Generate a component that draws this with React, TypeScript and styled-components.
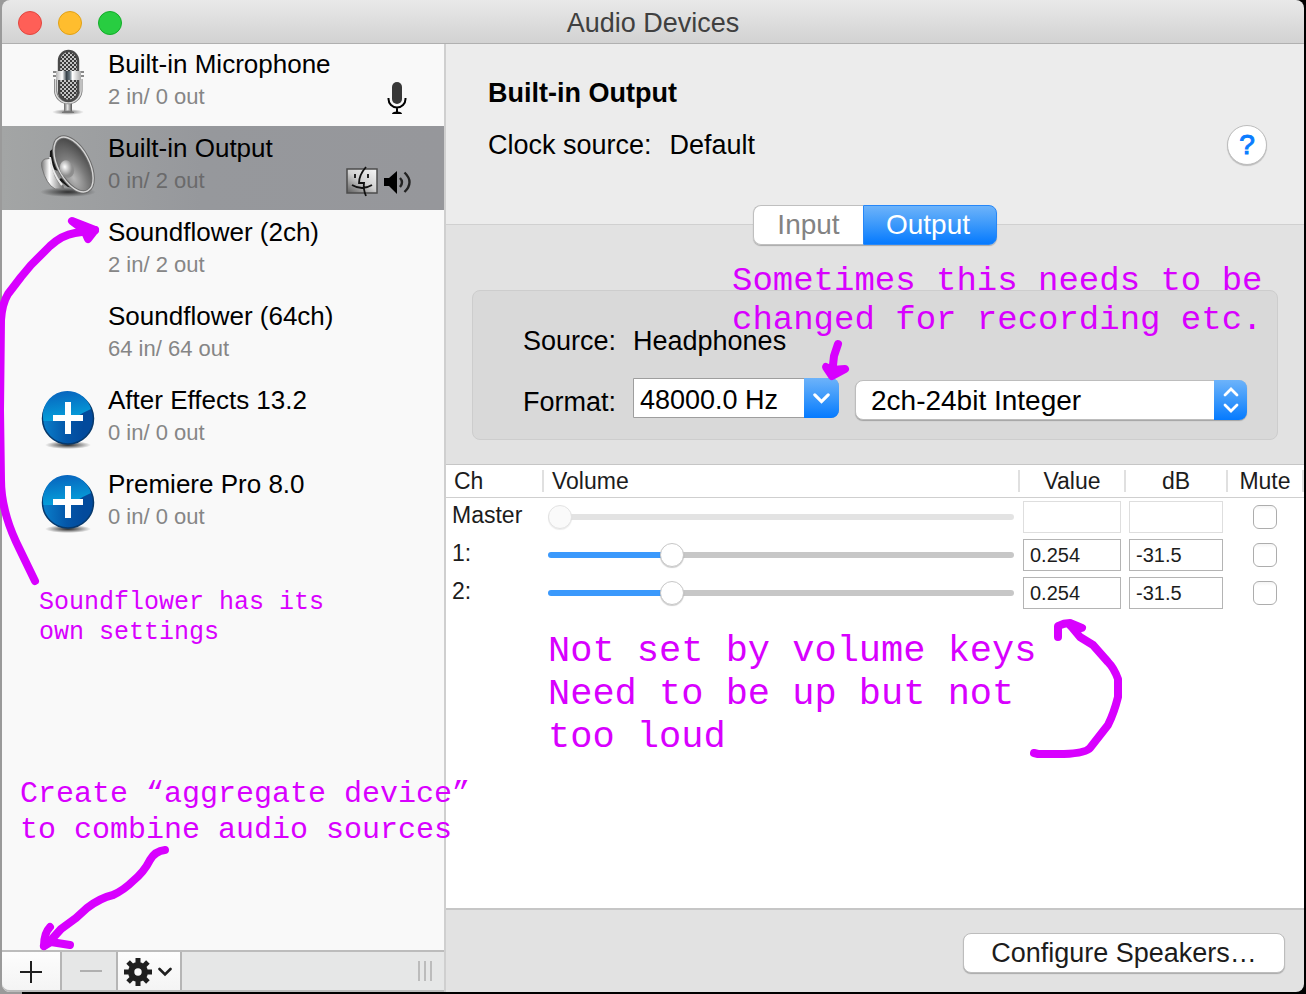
import React, { useState } from 'react';
import styled, { createGlobalStyle, css } from 'styled-components';

const INK = '#d800ff';
const BLUE = 'linear-gradient(#6db3fa, #3a98fb 50%, #057aff)';

const GlobalStyle = createGlobalStyle`
  *, *::before, *::after { box-sizing: border-box; }
  body {
    margin: 0;
    background: linear-gradient(to right, #9a9a9a 22px, #000 22px);
    font-family: "Liberation Sans", Arial, sans-serif;
    color: #000;
  }
  button, input, select { font: inherit; color: inherit; margin: 0; }
`;

const Page = styled.div`
  min-height: 100vh;
  display: flex;
  padding: 0 2px 2px;
`;

const Window = styled.div`
  flex: 1;
  min-width: 0;
  display: flex;
  flex-direction: column;
`;

const TitleBar = styled.header`
  display: grid;
  grid-template-columns: 1fr auto 1fr;
  align-items: center;
  height: 44px;
  padding: 2px 16px 0;
  border-bottom: 1px solid #b0b0b0;
  border-radius: 8px 8px 0 0;
  background: linear-gradient(#e9e9e9, #d2d2d2);
`;

const Lights = styled.div`
  display: flex;
  gap: 16px;
`;

const Light = styled.button<{ $fill: string; $edge: string }>`
  width: 24px;
  height: 24px;
  padding: 0;
  border-radius: 50%;
  border: 1px solid ${(p) => p.$edge};
  background: ${(p) => p.$fill};
`;

const WindowTitle = styled.h1`
  margin: 0;
  font-size: 27px;
  line-height: 32px;
  font-weight: 400;
  color: #404040;
`;

const Body = styled.div`
  flex: 1;
  display: grid;
  grid-template-columns: 444px minmax(0, 1fr);
`;

const Sidebar = styled.aside`
  position: relative;
  z-index: 1;
  display: flex;
  flex-direction: column;
  border-right: 2px solid #cfcfcf;
  border-radius: 0 0 0 8px;
  background: #f9f9f9;
`;

const DeviceList = styled.ul`
  flex: 1;
  margin: -2px 0 0;
  padding: 0;
  list-style: none;
`;

const DeviceItem = styled.li<{ $selected?: boolean }>`
  display: grid;
  grid-template-columns: 60px 1fr auto;
  column-gap: 10px;
  height: 84px;
  padding: 0 32px 0 36px;
  ${(p) => p.$selected && css`background: linear-gradient(to right, #a3a5a5, #96989c 45%, #96979b);`}
`;

const DeviceText = styled.div`
  display: flex;
  flex-direction: column;
  gap: 4px;
  padding-top: 7px;
  white-space: nowrap;
`;

const DeviceName = styled.span`
  font-size: 26px;
  line-height: 30px;
`;

const DeviceInfo = styled.span<{ $selected?: boolean }>`
  font-size: 22px;
  line-height: 28px;
  color: ${(p) => (p.$selected ? '#6a6a6b' : '#868686')};
`;

const Badges = styled.div`
  display: flex;
  gap: 6px;
  align-self: end;
  padding-bottom: 12px;
`;

const SidebarBar = styled.div`
  display: flex;
  align-items: stretch;
  height: 42px;
  border-top: 2px solid #bcbcbc;
  border-bottom: 2px solid #bcbcbc;
  border-radius: 0 0 0 8px;
  background: #e6e7e7;
`;

const BarButton = styled.button<{ $width: number }>`
  display: flex;
  align-items: center;
  justify-content: center;
  gap: 6px;
  width: ${(p) => p.$width}px;
  padding: 2px 2px 0 0;
  border: 0;
  border-right: 2px solid #b5b5b5;
  background: linear-gradient(#fdfdfd, #f4f4f4);
  color: #1f1f1f;
  &:first-child { border-bottom-left-radius: 8px; padding-right: 0; }
  &:disabled { padding: 0 0 0 4px; background: #e6e7e7; color: #b0b0b0; }
`;

const Grip = styled.span`
  align-self: center;
  width: 15px;
  height: 20px;
  margin: 0 11px 0 auto;
  background: repeating-linear-gradient(to right, #bcbcbc 0 2px, transparent 2px 6px);
`;

const Main = styled.main`
  display: flex;
  flex-direction: column;
  min-width: 0;
  border-bottom-right-radius: 8px;
  background: #e2e2e2;
`;

const DeviceHeader = styled.section`
  display: flex;
  flex-direction: column;
  gap: 16px;
  padding: 33px 37px 59px 42px;
  background: #ececec;
`;

const DeviceTitle = styled.h2`
  margin: 0;
  font-size: 27px;
  line-height: 32px;
`;

const ClockRow = styled.div`
  display: flex;
  align-items: center;
  gap: 18px;
  height: 40px;
  font-size: 27px;
`;

const HelpButton = styled.button`
  width: 40px;
  height: 40px;
  margin-left: auto;
  padding: 0;
  border: 1px solid #bdbdbd;
  border-radius: 50%;
  background: #fff;
  box-shadow: 0 1px 1px rgba(0, 0, 0, 0.2);
  font-size: 28px;
  line-height: 36px;
  color: #0a7cff;
  -webkit-text-stroke: 1px #0a7cff;
`;

const Settings = styled.section`
  position: relative;
  display: flex;
  flex-direction: column;
  padding: 0 26px 24px;
  border-top: 1px solid #d0d0d0;
`;

const Segments = styled.div`
  display: flex;
  align-self: center;
  height: 40px;
  margin: -20px 0 45px;
  border-radius: 8px;
  box-shadow: 0 1px 1px rgba(0, 0, 0, 0.25);
`;

const Segment = styled.button<{ $active?: boolean }>`
  width: ${(p) => (p.$active ? 134 : 110)}px;
  padding: 0;
  font-size: 28px;
  line-height: 36px;
  border: 1px solid #bfbfbf;
  border-right: 0;
  border-radius: 8px 0 0 8px;
  background: #fff;
  color: #838383;
  ${(p) =>
    p.$active &&
    css`
      padding-right: 4px;
      border: 1px solid #2687f8;
      border-radius: 0 8px 8px 0;
      background: ${BLUE};
      color: #fff;
    `}
`;

const Group = styled.div`
  display: flex;
  flex-direction: column;
  gap: 21px;
  padding: 34px 30px 19px 50px;
  border: 1px solid #cdcdcd;
  border-radius: 8px;
  background: #d9d9d9;
  font-size: 27px;
`;

const Field = styled.div`
  display: flex;
  gap: 16px;
  line-height: 32px;
`;

const FieldName = styled.span`
  width: 94px;
`;

const FormatRow = styled.div`
  display: flex;
  gap: 16px;
  height: 42px;
`;

const FormatLabel = styled.label`
  align-self: end;
  width: 94px;
  line-height: 36px;
`;

const SelectBox = styled.div<{ $popup?: boolean }>`
  display: grid;
  grid-template-columns: 1fr auto;
  height: 40px;
  ${(p) => (p.$popup ? css`flex: 1; align-self: end;` : css`width: 206px;`)}
`;

const Select = styled.select<{ $popup?: boolean }>`
  appearance: none;
  grid-area: 1 / 1 / 2 / 3;
  width: 100%;
  height: 40px;
  padding: ${(p) => (p.$popup ? '0 36px 0 15px' : '4px 36px 0 6px')};
  border: ${(p) => (p.$popup ? '1px solid #bdbdbd' : '1px solid #9e9e9e')};
  border-radius: ${(p) => (p.$popup ? '8px' : '0 8px 8px 0')};
  background: #fff;
  font-size: ${(p) => (p.$popup ? 28 : 27)}px;
  box-shadow: ${(p) => (p.$popup ? '0 1px 1px rgba(0, 0, 0, 0.25)' : 'none')};
`;

const SelectArrow = styled.span<{ $width: number }>`
  grid-area: 1 / 2 / 2 / 3;
  z-index: 1;
  display: flex;
  align-items: center;
  justify-content: center;
  width: ${(p) => p.$width}px;
  border-radius: 0 8px 8px 0;
  background: ${BLUE};
  pointer-events: none;
`;

const ChannelPanel = styled.section`
  position: relative;
  flex: 1;
  border-top: 1px solid #c6c6c6;
  background: #fff;
`;

const Table = styled.table`
  width: 100%;
  table-layout: fixed;
  border-collapse: separate;
  border-spacing: 0;
  font-size: 23px;
  color: #1c1c1c;
`;

const HeadCell = styled.th<{ $width?: number; $center?: boolean }>`
  width: ${(p) => (p.$width ? `${p.$width}px` : 'auto')};
  height: 33px;
  padding: 0;
  border-bottom: 1px solid #cfcfcf;
  font-weight: 400;
  text-align: ${(p) => (p.$center ? 'center' : 'left')};
  span {
    display: block;
    height: 22px;
    padding: 0 ${(p) => (p.$center ? 0 : 8)}px;
    border-right: 2px solid #e0e0e0;
    line-height: 22px;
  }
`;

const RowHead = styled.th`
  height: 38px;
  padding: 0 0 4px 6px;
  font-weight: 400;
  text-align: left;
`;

const Cell = styled.td<{ $pad: string; $center?: boolean }>`
  height: 38px;
  padding: ${(p) => p.$pad};
  line-height: 0;
  text-align: ${(p) => (p.$center ? 'center' : 'left')};
`;

const Slider = styled.input`
  --track: #c7c7c7;
  --fill: #3b99fc;
  --at: calc(12px + (100% - 24px) * var(--level));
  appearance: none;
  display: block;
  width: 100%;
  height: 26px;
  background: transparent;
  &::-webkit-slider-runnable-track {
    height: 6px;
    border-radius: 3px;
    background: linear-gradient(to right, var(--fill) var(--at), var(--track) var(--at));
  }
  &::-webkit-slider-thumb {
    appearance: none;
    width: 24px;
    height: 24px;
    margin-top: -9px;
    border: 1px solid #c8c8c8;
    border-radius: 50%;
    background: #fff;
    box-shadow: 0 1px 1px rgba(0, 0, 0, 0.2);
  }
  &:disabled {
    --track: #e3e3e3;
    --fill: #e3e3e3;
  }
  &:disabled::-webkit-slider-thumb {
    border-color: #e3e3e3;
    background: #fafafa;
    box-shadow: 0 1px 1px rgba(0, 0, 0, 0.08);
  }
`;

const NumberBox = styled.input`
  width: 100%;
  height: 32px;
  padding: 0 6px;
  border: 1px solid #b4b4b4;
  border-radius: 0;
  background: #fff;
  font-size: 20px;
  &:disabled { border: 1px solid #dedede; }
`;

const Tick = styled.input`
  appearance: none;
  width: 24px;
  height: 24px;
  border: 1px solid #adadad;
  border-radius: 6px;
  background: linear-gradient(#f4f4f4, #fff 4px);
  &:checked { background: ${BLUE}; }
`;

const Footer = styled.footer`
  display: flex;
  justify-content: flex-end;
  height: 84px;
  padding: 23px 19px 0;
  border-top: 2px solid #c6c6c6;
`;

const PushButton = styled.button`
  width: 322px;
  height: 40px;
  padding: 0;
  border: 1px solid #bdbdbd;
  border-radius: 8px;
  background: #fff;
  box-shadow: 0 1px 1px rgba(0, 0, 0, 0.25);
  font-size: 27px;
  line-height: 36px;
  color: #1c1c1c;
`;

type Spot = { $top?: number; $bottom?: number; $left?: number; $right?: number };

const spot = css<Spot>`
  position: absolute;
  ${(p) => p.$top !== undefined && `top: ${p.$top}px;`}
  ${(p) => p.$bottom !== undefined && `bottom: ${p.$bottom}px;`}
  ${(p) => p.$left !== undefined && `left: ${p.$left}px;`}
  ${(p) => p.$right !== undefined && `right: ${p.$right}px;`}
  z-index: 2;
  pointer-events: none;
`;

const Note = styled.p<Spot & { $size: number; $line: number }>`
  ${spot}
  margin: 0;
  font-family: "Liberation Mono", monospace;
  font-size: ${(p) => p.$size}px;
  line-height: ${(p) => p.$line}px;
  white-space: nowrap;
  color: ${INK};
`;

const Arrow = styled.svg<Spot>`
  ${spot}
  overflow: visible;
  fill: none;
  stroke: ${INK};
  stroke-width: 8px;
  stroke-linecap: round;
  stroke-linejoin: round;
`;

const StudioMicIcon = () => (
  <svg width="60" height="76" viewBox="0 0 60 76" aria-hidden="true">
    <defs>
      <pattern id="mesh" width="4" height="4" patternUnits="userSpaceOnUse">
        <rect width="4" height="4" fill="#3a3a3a" />
        <circle cx="1" cy="1" r="1" fill="#f2f2f2" />
        <circle cx="3" cy="3" r="1" fill="#f2f2f2" />
      </pattern>
      <linearGradient id="band">
        <stop offset="0" stopColor="#b5b5b5" />
        <stop offset=".25" stopColor="#fff" />
        <stop offset=".42" stopColor="#39434a" />
        <stop offset=".56" stopColor="#6d7a82" />
        <stop offset=".66" stopColor="#fff" />
        <stop offset="1" stopColor="#aaa" />
      </linearGradient>
      <linearGradient id="stem">
        <stop offset="0" stopColor="#666" />
        <stop offset=".45" stopColor="#e6e6e6" />
        <stop offset="1" stopColor="#555" />
      </linearGradient>
      <radialGradient id="micShade">
        <stop offset="0" stopColor="#000" stopOpacity=".55" />
        <stop offset="1" stopColor="#000" stopOpacity="0" />
      </radialGradient>
    </defs>
    <ellipse cx="30" cy="70" rx="16" ry="3" fill="url(#micShade)" />
    <rect x="26" y="61" width="8" height="9" fill="url(#stem)" />
    <path d="M24 70q6-3 12 0v1H24z" fill="#777" />
    <path d="M17.500 37v12a12.800 13 0 0 0 25.500 0V37" fill="none" stroke="#777" strokeWidth="3" />
    <path d="M17.500 37v12a12.800 13 0 0 0 25.500 0V37" fill="none" stroke="#dadada" strokeWidth="1.500" />
    <rect x="21" y="9" width="19" height="50" rx="9.500" fill="url(#mesh)" stroke="#4a4a4a" strokeWidth="2.400" />
    <path d="M15 30h4M15 34h4M42 30h4M42 34h4" stroke="#888" strokeWidth="2" />
    <rect x="18" y="29" width="25" height="9" rx="1" fill="url(#band)" />
  </svg>
);

const SpeakerConeIcon = () => (
  <svg width="60" height="76" viewBox="0 0 60 76" aria-hidden="true">
    <defs>
      <linearGradient id="magnet">
        <stop offset="0" stopColor="#777" />
        <stop offset=".35" stopColor="#fff" />
        <stop offset=".65" stopColor="#bbb" />
        <stop offset="1" stopColor="#666" />
      </linearGradient>
      <radialGradient id="cone" cx=".3" cy=".7" r=".75">
        <stop offset="0" stopColor="#b8b8b8" />
        <stop offset=".5" stopColor="#7a7a7a" />
        <stop offset="1" stopColor="#484848" />
      </radialGradient>
      <radialGradient id="dome" cx=".4" cy=".35">
        <stop offset="0" stopColor="#fff" />
        <stop offset="1" stopColor="#8d8d8d" />
      </radialGradient>
      <radialGradient id="coneShade">
        <stop offset="0" stopColor="#000" stopOpacity=".7" />
        <stop offset="1" stopColor="#000" stopOpacity="0" />
      </radialGradient>
    </defs>
    <ellipse cx="30" cy="66" rx="28" ry="5" fill="url(#coneShade)" />
    <path d="M7 33q-5 2-3 9 4 16 13 21l9 0-10-31z" fill="url(#magnet)" stroke="#777" />
    <path d="M13 24l4-8 26 50-22-8q-10-14-8-34z" fill="#8a8a8a" />
    <path d="M12 25q-1 12 3 18l5 2-5-22zM21 54l9 7 6 1-13-10z" fill="#161616" />
    <path d="M12 31q2 16 12 28" fill="none" stroke="#e8e8e8" strokeWidth="2" />
    <g transform="rotate(-28 35.500 38.500)">
      <ellipse cx="35.500" cy="38.500" rx="15.500" ry="30" fill="url(#cone)" stroke="#6c6c6c" strokeWidth="3.400" />
      <ellipse cx="35.500" cy="38.500" rx="15.500" ry="30" fill="none" stroke="#d6d6d6" strokeWidth="1.400" />
    </g>
    <ellipse cx="29" cy="43" rx="7" ry="9" transform="rotate(-18 29 43)" fill="url(#dome)" />
  </svg>
);

const PlusDiscIcon = () => (
  <svg width="60" height="76" viewBox="0 0 60 76" aria-hidden="true">
    <defs>
      <linearGradient id="disc" x1="0" y1=".8" x2=".8" y2=".8">
        <stop offset="0" stopColor="#0a80cc" />
        <stop offset=".6" stopColor="#0456a8" />
        <stop offset="1" stopColor="#024a9c" />
      </linearGradient>
      <linearGradient id="gloss" x1=".3" y1="0" x2=".5" y2="1">
        <stop offset="0" stopColor="#0863bd" />
        <stop offset="1" stopColor="#05a3dc" />
      </linearGradient>
      <radialGradient id="discShade">
        <stop offset="0" stopColor="#000" stopOpacity=".85" />
        <stop offset="1" stopColor="#000" stopOpacity="0" />
      </radialGradient>
    </defs>
    <ellipse cx="30" cy="67" rx="23" ry="4" fill="url(#discShade)" />
    <circle cx="30" cy="40.500" r="25.500" fill="url(#disc)" stroke="#07396c" strokeWidth="1.500" />
    <path d="M5.500 43A24.500 24.500 0 0 1 53 31Q44 35 38 39T22 43z" fill="url(#gloss)" />
    <path d="M30 24v32M15 40h30" stroke="#fff" strokeWidth="6" />
  </svg>
);

const MicBadge = () => (
  <svg width="28" height="32" viewBox="0 0 28 32" role="img" aria-label="Default input">
    <rect x="8" y="0" width="10" height="22" rx="5" fill="#383838" />
    <path d="M4.500 16v1a8.500 8.500 0 0 0 17 0v-1M13 26v4" fill="none" stroke="#000" strokeWidth="2" />
    <path d="M8 32q0-2.500 5-2.500t5 2.500z" />
  </svg>
);

const FinderBadge = () => (
  <svg width="32" height="32" viewBox="0 0 32 32" role="img" aria-label="System sounds">
    <defs>
      <linearGradient id="face" x1=".9" y1="0" x2=".1" y2="1">
        <stop offset="0" stopColor="#f4f4f4" />
        <stop offset=".5" stopColor="#d0d0d0" />
        <stop offset="1" stopColor="#666" />
      </linearGradient>
    </defs>
    <rect x="1" y="3" width="30" height="24" fill="url(#face)" stroke="#4c4c4c" strokeWidth="1.500" />
    <path d="M9 8v4M22 8v4M6 19q10 6 20 0M20 1q-7 8-7 16h5q-1 6 2 13" fill="none" stroke="#111" strokeWidth="1.800" />
  </svg>
);

const SpeakerBadge = () => (
  <svg width="28" height="32" viewBox="0 0 28 32" role="img" aria-label="Default output">
    <path d="M0 12h5l8-7v23l-8-8H0z" />
    <path d="M16 12q4 4 0 9" fill="none" stroke="#222" strokeWidth="2.400" />
    <path d="M20.500 6.500q10 9.500 0 19.500" fill="none" stroke="#222" strokeWidth="2.400" />
  </svg>
);

const GearIcon = () => (
  <svg width="28" height="28" viewBox="-14 -14 28 28" aria-hidden="true">
    {[0, 45, 90, 135].map((angle) => (
      <rect key={angle} x="-2.500" y="-14" width="5" height="28" transform={`rotate(${angle})`} fill="#1f1f1f" />
    ))}
    <circle r="7" fill="none" stroke="#1f1f1f" strokeWidth="6" />
    <circle r="3.700" fill="#fafafa" />
  </svg>
);

const Chevron = ({ width = 14, color = '#fff' }) => (
  <svg width={width} height={width - 4} viewBox="0 0 14 10" aria-hidden="true">
    <path d="M1.500 2L7 7.500L12.500 2" fill="none" stroke={color} strokeWidth="2.600" strokeLinecap="round" />
  </svg>
);

const UpDown = () => (
  <svg width="16" height="26" viewBox="0 0 16 26" fill="none" stroke="#fff" strokeWidth="2.800" strokeLinecap="round" aria-hidden="true">
    <path d="M2 8L8 2l6 6M2 18l6 6 6-6" />
  </svg>
);

const devices = [
  { name: 'Built-in Microphone', info: '2 in/ 0 out', icon: <StudioMicIcon />, badges: <MicBadge /> },
  { name: 'Built-in Output', info: '0 in/ 2 out', icon: <SpeakerConeIcon />, badges: <><FinderBadge /><SpeakerBadge /></>, selected: true },
  { name: 'Soundflower (2ch)', info: '2 in/ 2 out' },
  { name: 'Soundflower (64ch)', info: '64 in/ 64 out' },
  { name: 'After Effects 13.2', info: '0 in/ 0 out', icon: <PlusDiscIcon /> },
  { name: 'Premiere Pro 8.0', info: '0 in/ 0 out', icon: <PlusDiscIcon /> },
];

const channels = [
  { name: 'Master', level: 0, value: '', db: '', disabled: true },
  { name: '1:', level: 0.254, value: '0.254', db: '-31.5', disabled: false },
  { name: '2:', level: 0.254, value: '0.254', db: '-31.5', disabled: false },
];

const ChannelRow = ({ channel }: { channel: (typeof channels)[number] }) => {
  const [level, setLevel] = useState(channel.level);
  return (
    <tr>
      <RowHead scope="row">{channel.name}</RowHead>
      <Cell $pad="0 6px 0 4px">
        <Slider
          type="range"
          min="0"
          max="1"
          step="0.001"
          value={level}
          disabled={channel.disabled}
          aria-label={`Volume ${channel.name}`}
          style={{ '--level': level } as React.CSSProperties}
          onChange={(e) => setLevel(Number(e.target.value))}
        />
      </Cell>
      <Cell $pad="0 5px 0 3px">
        <NumberBox aria-label={`Value ${channel.name}`} defaultValue={channel.value} disabled={channel.disabled} />
      </Cell>
      <Cell $pad="0 5px 0 3px">
        <NumberBox aria-label={`dB ${channel.name}`} defaultValue={channel.db} disabled={channel.disabled} />
      </Cell>
      <Cell $pad="0 2px 0 0" $center>
        <Tick type="checkbox" aria-label={`Mute ${channel.name}`} />
      </Cell>
    </tr>
  );
};

export default function App() {
  return (
    <Page>
      <GlobalStyle />
      <Window>
        <TitleBar>
          <Lights>
            <Light $fill="#ff5f57" $edge="#e2463f" aria-label="Close" />
            <Light $fill="#ffbd2e" $edge="#e1a116" aria-label="Minimize" />
            <Light $fill="#28cd41" $edge="#12ac28" aria-label="Zoom" />
          </Lights>
          <WindowTitle>Audio Devices</WindowTitle>
        </TitleBar>
        <Body>
          <Sidebar>
            <DeviceList>
              {devices.map((d) => (
                <DeviceItem key={d.name} $selected={d.selected}>
                  <div>{d.icon}</div>
                  <DeviceText>
                    <DeviceName>{d.name}</DeviceName>
                    <DeviceInfo $selected={d.selected}>{d.info}</DeviceInfo>
                  </DeviceText>
                  <Badges>{d.badges}</Badges>
                </DeviceItem>
              ))}
            </DeviceList>
            <SidebarBar>
              <BarButton $width={60} aria-label="Add device">
                <svg width="22" height="22" viewBox="0 0 22 22" stroke="currentColor" strokeWidth="2">
                  <path d="M11 0v22M0 11h22" />
                </svg>
              </BarButton>
              <BarButton $width={56} disabled aria-label="Remove device">
                <svg width="22" height="2" viewBox="0 0 22 2" stroke="currentColor" strokeWidth="2">
                  <path d="M0 1h22" />
                </svg>
              </BarButton>
              <BarButton $width={64} aria-label="Device actions">
                <GearIcon />
                <Chevron color="#1f1f1f" />
              </BarButton>
              <Grip />
            </SidebarBar>
            <Arrow $left={-2} $top={166} width="110" height="380" viewBox="0 0 110 380">
              <path d="M35 371L20 340Q11 322 7 308Q1 288 1 270L0 200L1 110Q2 94 8 84L21 67L31 55L50 36Q62 25 75 23L95 20" />
              <path d="M72 11L95 20L88 29L84 20Z" fill={INK} />
            </Arrow>
            <Note $size={25} $line={30} $left={37} $top={544}>
              Soundflower has its<br />own settings
            </Note>
            <Note $size={30} $line={36} $left={18} $bottom={144}>
              Create “aggregate device”<br />to combine audio sources
            </Note>
            <Arrow $left={34} $bottom={36} width="140" height="116" viewBox="0 0 140 116">
              <path d="M129 10Q119 11 114 20Q108 32 97 41Q88 50 77 55Q64 58 51 68L40 78L25 89L16 99L8 106" />
              <path d="M14 87Q8 93 8 106L15 102L34 105" />
            </Arrow>
          </Sidebar>
          <Main>
            <DeviceHeader>
              <DeviceTitle>Built-in Output</DeviceTitle>
              <ClockRow>
                <span>Clock source:</span>
                <span>Default</span>
                <HelpButton aria-label="Help">?</HelpButton>
              </ClockRow>
            </DeviceHeader>
            <Settings>
              <Segments>
                <Segment>Input</Segment>
                <Segment $active>Output</Segment>
              </Segments>
              <Group>
                <Field>
                  <FieldName>Source:</FieldName>
                  <span>Headphones</span>
                </Field>
                <FormatRow>
                  <FormatLabel htmlFor="rate">Format:</FormatLabel>
                  <SelectBox>
                    <Select id="rate">
                      <option>48000.0 Hz</option>
                      <option>44100.0 Hz</option>
                    </Select>
                    <SelectArrow $width={35}><Chevron width={17} /></SelectArrow>
                  </SelectBox>
                  <SelectBox $popup>
                    <Select $popup aria-label="Sample format">
                      <option>2ch-24bit Integer</option>
                      <option>2ch-16bit Integer</option>
                    </Select>
                    <SelectArrow $width={33}><UpDown /></SelectArrow>
                  </SelectBox>
                </FormatRow>
              </Group>
              <Note $size={34} $line={39} $left={286} $top={37}>
                Sometimes this needs to be<br />changed for recording etc.
              </Note>
              <Arrow $left={372} $top={111} width="36" height="48" viewBox="0 0 36 48">
                <path d="M20 8L16 20L14 38" />
                <path d="M8 31L14 40L27 33L14 34Z" fill={INK} />
              </Arrow>
            </Settings>
            <ChannelPanel>
              <Table>
                <thead>
                  <tr>
                    <HeadCell $width={98}><span>Ch</span></HeadCell>
                    <HeadCell><span>Volume</span></HeadCell>
                    <HeadCell $width={106} $center><span>Value</span></HeadCell>
                    <HeadCell $width={102} $center><span>dB</span></HeadCell>
                    <HeadCell $width={76} $center><span>Mute</span></HeadCell>
                  </tr>
                </thead>
                <tbody>
                  {channels.map((c) => <ChannelRow key={c.name} channel={c} />)}
                </tbody>
              </Table>
              <Note $size={37} $line={43} $left={102} $top={165}>
                Not set by volume keys<br />Need to be up but not<br />too loud
              </Note>
              <Arrow $right={180} $top={151} width="96" height="144" viewBox="0 0 96 144">
                <path d="M6 137L10 138H36Q58 137 62 132L80 109Q86 97 90 81V63Q86 52 80 46L65 29L52 21L42 9" />
                <path d="M30 21V10Q36 7 42 7L54 12L46 12L42 9" />
              </Arrow>
            </ChannelPanel>
            <Footer>
              <PushButton>Configure Speakers…</PushButton>
            </Footer>
          </Main>
        </Body>
      </Window>
    </Page>
  );
}
